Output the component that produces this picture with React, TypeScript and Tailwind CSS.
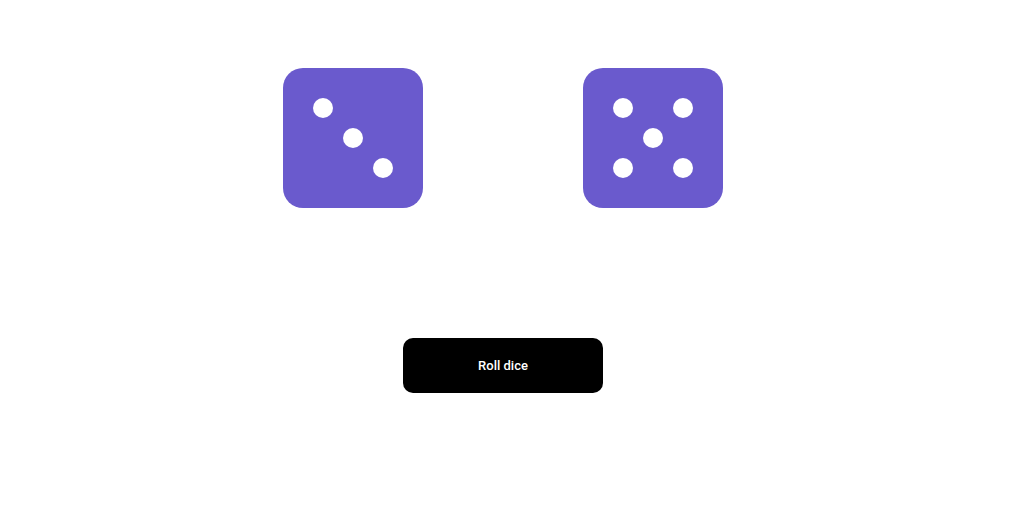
import React from "react";

function Die({ pips }: { pips: number[] }) {
  return (
    <div className="w-[140px] h-[140px] rounded-[20px] bg-[#6a5acd] p-[30px] grid grid-cols-[20px_20px_20px] grid-rows-[20px_20px_20px] gap-[10px]">
      {Array.from({ length: 9 }, (_, i) => (
        <div key={i} className={pips.includes(i) ? "w-[20px] h-[20px] rounded-full bg-white" : "w-[20px] h-[20px]"} />
      ))}
    </div>
  );
}

export default function App() {
  return (
    <div className="w-[1006px] min-h-[505px] bg-white flex flex-col items-center pt-[68px]" style={{ fontFamily: "Roboto, 'Liberation Sans', Arial, sans-serif" }}>
      <div className="flex gap-[160px]">
        <Die pips={[0, 4, 8]} />
        <Die pips={[0, 2, 4, 6, 8]} />
      </div>
      <button className="mt-[130px] w-[200px] h-[55px] rounded-[10px] bg-black text-white text-[13px] font-medium">
        Roll dice
      </button>
    </div>
  );
}
